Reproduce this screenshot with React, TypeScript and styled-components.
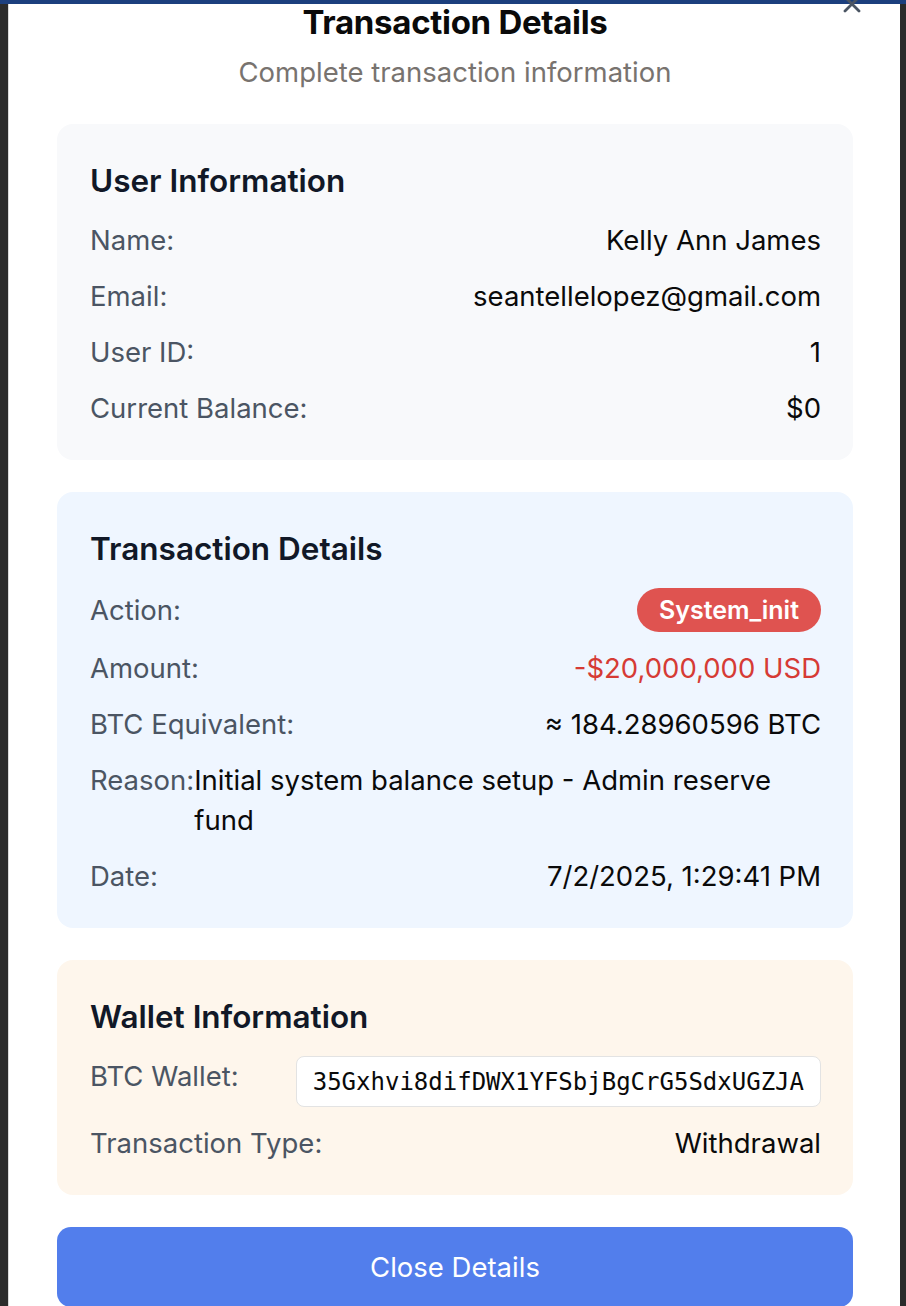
import styled, { createGlobalStyle } from "styled-components";

const GlobalStyle = createGlobalStyle`
  html, body {
    margin: 0;
    padding: 0;
    background: #2b2b2b;
    font-family: Inter, "Noto Sans", "Liberation Sans", sans-serif;
    overflow: hidden;
  }
  * {
    box-sizing: border-box;
  }
`;

const Screen = styled.div`
  width: 906px;
  height: 1306px;
  display: flex;
  flex-direction: column;
  background: #2b2b2b;
  overflow: hidden;
`;

const TopBar = styled.div`
  height: 4px;
  flex-shrink: 0;
  background: #1c3f7e;
`;

const Backdrop = styled.div`
  flex: 1;
  display: flex;
  padding: 0 6px 0 8px;
`;

const Modal = styled.div`
  position: relative;
  flex: 1;
  background: #ffffff;
  border-left: 1px solid #d9d9d9;
  padding: 0 47px 0 48px;
  display: flex;
  flex-direction: column;
`;

const CloseButton = styled.button`
  position: absolute;
  top: -14px;
  right: 34px;
  width: 28px;
  height: 28px;
  padding: 0;
  border: 0;
  background: transparent;
  color: #4b5563;
  cursor: pointer;
`;

const Title = styled.h2`
  margin: 0;
  text-align: center;
  font-size: 33px;
  line-height: 36px;
  font-weight: 700;
  color: #0a0a0a;
  letter-spacing: -0.3px;
`;

const Subtitle = styled.p`
  margin: 16px 0 36px;
  text-align: center;
  font-size: 27.5px;
  line-height: 32px;
  color: #78736f;
`;

const Cards = styled.div`
  display: flex;
  flex-direction: column;
  gap: 32px;
`;

const Card = styled.section<{ $tone: "gray" | "blue" | "orange" }>`
  border-radius: 16px;
  padding: 32px 32px 32px 33px;
  background: ${({ $tone }) =>
    $tone === "blue" ? "#eff6ff" : $tone === "orange" ? "#fef6ec" : "#f8f9fb"};
  display: flex;
  flex-direction: column;
  gap: 16px;
`;

const CardTitle = styled.h3`
  margin: 0 0 -2px;
  font-size: 31.5px;
  line-height: 50px;
  font-weight: 600;
  color: #111827;
`;

const Row = styled.div<{ $top?: boolean }>`
  display: flex;
  justify-content: space-between;
  align-items: ${({ $top }) => ($top ? "flex-start" : "center")};
  min-height: 40px;
  font-size: 27.5px;
  line-height: 40px;
`;

const Label = styled.span`
  color: #4b5563;
  white-space: nowrap;
`;

const Value = styled.span<{ $color?: string }>`
  color: ${({ $color }) => $color || "#0a0a0a"};
  text-align: right;
`;

const LongValue = styled.span`
  color: #0a0a0a;
  margin-right: auto;
`;

const Badge = styled.span`
  display: inline-flex;
  align-items: center;
  height: 44px;
  padding: 0 22px;
  border-radius: 22px;
  background: #df5350;
  color: #ffffff;
  font-size: 25px;
  font-weight: 600;
`;

const WalletBox = styled.div`
  height: 51px;
  padding: 0 16px;
  display: flex;
  align-items: center;
  border: 1px solid #e3e3e3;
  border-radius: 8px;
  background: #ffffff;
  font-family: "DejaVu Sans Mono", "Liberation Mono", monospace;
  font-size: 24px;
  color: #0a0a0a;
`;

const PrimaryButton = styled.button`
  margin-top: 32px;
  height: 80px;
  flex-shrink: 0;
  border: 0;
  border-radius: 14px;
  background: #527eec;
  color: #ffffff;
  font-family: inherit;
  font-size: 27.5px;
  cursor: pointer;
`;

export default function App() {
  return (
    <Screen>
      <GlobalStyle />
      <TopBar />
      <Backdrop>
        <Modal>
          <CloseButton aria-label="Close">
            <svg width="28" height="28" viewBox="0 0 24 24" fill="none" stroke="currentColor" strokeWidth="2.4" strokeLinecap="round">
              <path d="M18 6 6 18" />
              <path d="m6 6 12 12" />
            </svg>
          </CloseButton>
          <Title>Transaction Details</Title>
          <Subtitle>Complete transaction information</Subtitle>
          <Cards>
            <Card $tone="gray">
              <CardTitle>User Information</CardTitle>
              <Row>
                <Label>Name:</Label>
                <Value>Kelly Ann James</Value>
              </Row>
              <Row>
                <Label>Email:</Label>
                <Value>seantellelopez@gmail.com</Value>
              </Row>
              <Row>
                <Label>User ID:</Label>
                <Value>1</Value>
              </Row>
              <Row>
                <Label>Current Balance:</Label>
                <Value>$0</Value>
              </Row>
            </Card>
            <Card $tone="blue">
              <CardTitle>Transaction Details</CardTitle>
              <Row>
                <Label>Action:</Label>
                <Badge>System_init</Badge>
              </Row>
              <Row>
                <Label>Amount:</Label>
                <Value $color="#d63b35">-$20,000,000 USD</Value>
              </Row>
              <Row>
                <Label>BTC Equivalent:</Label>
                <Value>≈ 184.28960596 BTC</Value>
              </Row>
              <Row $top>
                <Label>Reason:</Label>
                <LongValue>Initial system balance setup - Admin reserve fund</LongValue>
              </Row>
              <Row>
                <Label>Date:</Label>
                <Value>7/2/2025, 1:29:41 PM</Value>
              </Row>
            </Card>
            <Card $tone="orange">
              <CardTitle>Wallet Information</CardTitle>
              <Row $top>
                <Label>BTC Wallet:</Label>
                <WalletBox>35Gxhvi8difDWX1YFSbjBgCrG5SdxUGZJA</WalletBox>
              </Row>
              <Row>
                <Label>Transaction Type:</Label>
                <Value>Withdrawal</Value>
              </Row>
            </Card>
          </Cards>
          <PrimaryButton>Close Details</PrimaryButton>
        </Modal>
      </Backdrop>
    </Screen>
  );
}
